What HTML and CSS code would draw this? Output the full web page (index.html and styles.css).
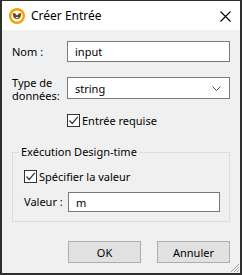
FILE: index.html
```html
<!DOCTYPE html>
<html lang="fr">
<head>
  <meta charset="UTF-8" />
  <title>Créer Entrée</title>
  <link rel="stylesheet" href="styles.css">
</head>
<body>
  <div class="window">
    <div class="titlebar">
      <svg class="app-icon" width="16" height="16" viewBox="0 0 16 16">
        <circle cx="8" cy="8" r="8" fill="#f5a000"/>
        <circle cx="8" cy="8" r="5.6" fill="#fff"/>
        <path d="M3.6 5.2 L6 5.2 L8 7.6 L10 5.2 L12.4 5.2 L11.4 9.4 Q8 13 4.6 9.4 Z" fill="#6b4a12"/>
        <path d="M6.4 9 L8 10.6 L9.6 9 Z" fill="#fff"/>
      </svg>
      <span class="title">Créer Entrée</span>
      <svg class="close" width="11" height="11" viewBox="0 0 11 11">
        <path d="M0.5 0.5 L10.5 10.5 M10.5 0.5 L0.5 10.5" stroke="#000" stroke-width="1.1"/>
      </svg>
    </div>

    <div class="content">
      <div class="form">
        <label class="lbl">Nom :</label>
        <div class="field">input</div>

        <label class="lbl two"><span>Type de</span><span>données:</span></label>
        <div class="field select">
          <span>string</span>
          <svg width="9" height="5" viewBox="0 0 9 5"><path d="M0.5 0.5 L4.5 4.5 L8.5 0.5" fill="none" stroke="#555" stroke-width="1"/></svg>
        </div>
      </div>

      <div class="check-row required">
        <span class="box"><svg width="11" height="11" viewBox="0 0 11 11"><path d="M1.5 5.5 L4.2 8.5 L9.8 1.8" fill="none" stroke="#333" stroke-width="1.2"/></svg></span>
        <span>Entrée requise</span>
      </div>

      <fieldset class="group">
        <legend>Exécution Design-time</legend>
        <div class="check-row">
          <span class="box"><svg width="11" height="11" viewBox="0 0 11 11"><path d="M1.5 5.5 L4.2 8.5 L9.8 1.8" fill="none" stroke="#333" stroke-width="1.2"/></svg></span>
          <span>Spécifier la valeur</span>
        </div>
        <div class="value-row">
          <label class="lbl">Valeur :</label>
          <div class="field small">m</div>
        </div>
      </fieldset>

      <div class="buttons">
        <button>OK</button>
        <button>Annuler</button>
      </div>
    </div>

    <svg class="grip" width="11" height="11" viewBox="0 0 11 11">
      <path d="M10 2 L2 10 M10 5 L5 10 M10 8 L8 10" stroke="#a0a0a0" stroke-width="1"/>
    </svg>
  </div>
</body>
</html>
```

FILE: styles.css
```css
* {
  box-sizing: border-box;
}
body {
  margin: 0;
  font-family: 'Noto Sans', sans-serif;
  font-size: 11px;
  color: #000;
}
.window {
  position: relative;
  width: 242px;
  height: 275px;
  background: #f0f0f0;
  border: 2px solid #2e2e2e;
  border-top: 1px solid #2e2e2e;
  display: flex;
  flex-direction: column;
}
.titlebar {
  height: 29px;
  background: #fff;
  display: flex;
  align-items: center;
  padding: 0 0 0 7px;
}
.app-icon {
  margin-right: 6px;
  margin-top: 1px;
}
.title {
  font-size: 12px;
  flex: 1;
}
.close {
  margin-right: 9px;
  margin-top: 1px;
}
.content {
  padding: 11px 10px 0 10px;
  display: flex;
  flex-direction: column;
}
.form {
  display: grid;
  grid-template-columns: 55px 1fr;
  grid-template-rows: 21px 22px;
  row-gap: 15px;
  align-items: center;
}
.lbl {
  line-height: 14px;
}
.lbl.two {
  align-self: start;
  display: flex;
  flex-direction: column;
  gap: 0;
  margin-top: -1px;
}
.lbl.two span {
  line-height: 13px;
}
.field {
  height: 21px;
  background: #fff;
  border: 1px solid #7a7a7a;
  padding: 0 7px;
  display: flex;
  align-items: center;
}
.select {
  height: 22px;
  justify-content: space-between;
  padding-right: 8px;
}
.check-row {
  display: flex;
  align-items: center;
  gap: 2px;
  height: 13px;
}
.required {
  margin: 15px 0 0 55px;
}
.box {
  width: 13px;
  height: 13px;
  background: #fff;
  border: 1px solid #333;
  display: flex;
  align-items: center;
  justify-content: center;
}
.group {
  margin: 17px 0 0 0;
  border: 1px solid #dcdcdc;
  padding: 0 9px 9px 11px;
}
.group legend {
  padding: 0 2px;
  margin-left: -5px;
  line-height: 16px;
}
.group .check-row {
  margin-top: 10px;
}
.value-row {
  display: flex;
  align-items: center;
  margin-top: 9px;
}
.value-row .lbl {
  width: 44px;
}
.field.small {
  flex: 1;
  height: 20px;
}
.buttons {
  display: flex;
  justify-content: flex-end;
  gap: 16px;
  margin-top: 19px;
}
button {
  width: 73px;
  height: 22px;
  background: #e1e1e1;
  border: 1px solid #adadad;
  font-family: 'Noto Sans', sans-serif;
  font-size: 11px;
  color: #000;
  padding: 0;
}
.grip {
  position: absolute;
  right: 0;
  bottom: 0;
}
```
